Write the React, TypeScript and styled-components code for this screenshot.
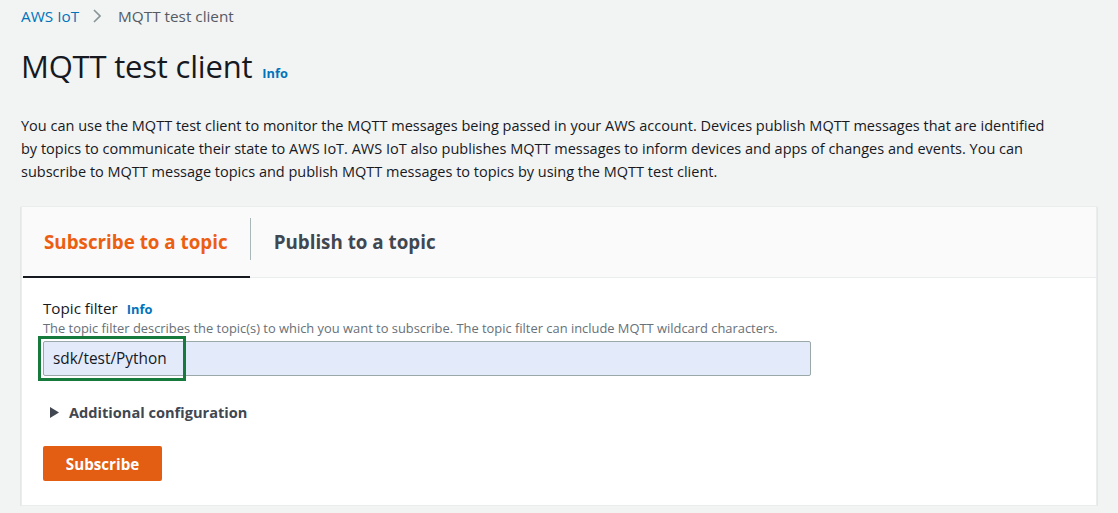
import React, { useState } from 'react';
import styled, { createGlobalStyle } from 'styled-components';

const GlobalStyle = createGlobalStyle`
  body {
    margin: 0;
    background-color: #f2f3f3;
    font-family: "Open Sans", "Liberation Sans", sans-serif;
    color: #16191f;
  }
`;

const Page = styled.div`
  padding: 0 21px;
`;

const Breadcrumbs = styled.nav`
  display: flex;
  align-items: center;
  height: 32px;
  font-size: 15.3px;
`;

const Crumb = styled.a`
  color: #0073bb;
  text-decoration: none;
  cursor: pointer;
`;

const CrumbCurrent = styled.span`
  color: #545b64;
`;

const Chevron = styled.svg`
  margin: 0 17px 0 14px;
`;

const TitleRow = styled.div`
  display: flex;
  align-items: baseline;
  margin-top: 14px;
`;

const Title = styled.h1`
  margin: 0;
  font-size: 31px;
  font-weight: 400;
  line-height: 40px;
  letter-spacing: -0.2px;
`;

const InfoLink = styled.a<{ $gap?: number }>`
  margin-left: ${(p) => p.$gap ?? 10}px;
  font-size: 12.8px;
  font-weight: 700;
  color: #0073bb;
  cursor: pointer;
`;

const Description = styled.p`
  margin: 28px 0 0;
  font-size: 14.5px;
  line-height: 23px;
  color: #16191f;
`;

const Panel = styled.section`
  margin-top: 23px;
  background: #ffffff;
  border: 1px solid #eaeded;
  box-shadow: 0 1px 1px 0 rgba(0, 28, 36, 0.3);
`;

const TabList = styled.div`
  display: flex;
  align-items: stretch;
  height: 70px;
  padding-left: 1px;
  background: #fafafa;
  border-bottom: 1px solid #eaeded;
`;

const Tab = styled.button<{ $active?: boolean }>`
  display: flex;
  align-items: center;
  padding: 0 ${(p) => (p.$active ? 22 : 24)}px 0 ${(p) => (p.$active ? 21 : 23)}px;
  border: none;
  background: transparent;
  font-family: inherit;
  font-size: 18.8px;
  font-weight: 700;
  color: ${(p) => (p.$active ? '#ec5f12' : '#414750')};
  cursor: pointer;
  border-bottom: 2px solid ${(p) => (p.$active ? '#16191f' : 'transparent')};
  margin-bottom: -1px;
`;

const TabDivider = styled.span`
  align-self: center;
  width: 1px;
  height: 42px;
  margin-top: -6px;
  background: #aab7b8;
`;

const PanelBody = styled.div`
  padding: 20px 21px 24px;
`;

const FieldLabel = styled.label`
  display: flex;
  align-items: baseline;
  font-size: 15.2px;
  line-height: 20px;
  color: #16191f;
`;

const FieldHint = styled.div`
  font-size: 12.9px;
  line-height: 18px;
  color: #687078;
`;

const InputWrap = styled.div`
  position: relative;
  margin-top: 4px;
  width: 768px;
`;

const TextInput = styled.input`
  box-sizing: border-box;
  width: 100%;
  height: 35px;
  padding: 0 9px;
  border: 1px solid #9aa8aa;
  border-radius: 2px;
  background: #e3ebfb;
  font-family: inherit;
  font-size: 15.4px;
  color: #16191f;
  outline: none;
`;

const Highlight = styled.span`
  position: absolute;
  left: -5px;
  top: -5px;
  width: 148px;
  height: 45px;
  box-sizing: border-box;
  border: 3px solid #167a3c;
  pointer-events: none;
`;

const Expander = styled.button`
  display: flex;
  align-items: center;
  margin-top: 26px;
  padding: 0 0 0 7px;
  border: none;
  background: transparent;
  font-family: inherit;
  font-size: 14.6px;
  font-weight: 700;
  color: #414750;
  cursor: pointer;
`;

const Caret = styled.svg`
  margin-right: 10px;
`;

const PrimaryButton = styled.button`
  display: block;
  margin-top: 24px;
  width: 119px;
  height: 35px;
  border: none;
  border-radius: 2px;
  background: #e35e13;
  color: #ffffff;
  font-family: inherit;
  font-size: 15.2px;
  font-weight: 700;
  cursor: pointer;
`;

const App: React.FC = () => {
  const [activeTab, setActiveTab] = useState<'subscribe' | 'publish'>('subscribe');
  const [topic, setTopic] = useState('sdk/test/Python');

  return (
    <Page>
      <GlobalStyle />
      <Breadcrumbs>
        <Crumb>AWS IoT</Crumb>
        <Chevron width="8" height="14" viewBox="0 0 8 14">
          <path d="M1 1l6 6-6 6" fill="none" stroke="#879596" strokeWidth="1.6" />
        </Chevron>
        <CrumbCurrent>MQTT test client</CrumbCurrent>
      </Breadcrumbs>

      <TitleRow>
        <Title>MQTT test client</Title>
        <InfoLink>Info</InfoLink>
      </TitleRow>

      <Description>
        You can use the MQTT test client to monitor the MQTT messages being passed in your AWS account. Devices publish MQTT messages that are identified
        <br />
        by topics to communicate their state to AWS IoT. AWS IoT also publishes MQTT messages to inform devices and apps of changes and events. You can
        <br />
        subscribe to MQTT message topics and publish MQTT messages to topics by using the MQTT test client.
      </Description>

      <Panel>
        <TabList>
          <Tab $active={activeTab === 'subscribe'} onClick={() => setActiveTab('subscribe')}>
            Subscribe to a topic
          </Tab>
          <TabDivider />
          <Tab $active={activeTab === 'publish'} onClick={() => setActiveTab('publish')}>
            Publish to a topic
          </Tab>
        </TabList>

        <PanelBody>
          <FieldLabel htmlFor="topic">
            Topic filter
            <InfoLink $gap={9}>Info</InfoLink>
          </FieldLabel>
          <FieldHint>
            The topic filter describes the topic(s) to which you want to subscribe. The topic filter can include MQTT wildcard characters.
          </FieldHint>
          <InputWrap>
            <TextInput id="topic" value={topic} onChange={(e) => setTopic(e.target.value)} />
            <Highlight />
          </InputWrap>

          <Expander>
            <Caret width="9" height="11" viewBox="0 0 9 11">
              <path d="M0 0l9 5.5L0 11z" fill="#414750" />
            </Caret>
            Additional configuration
          </Expander>

          <PrimaryButton>Subscribe</PrimaryButton>
        </PanelBody>
      </Panel>
    </Page>
  );
};

export default App;
